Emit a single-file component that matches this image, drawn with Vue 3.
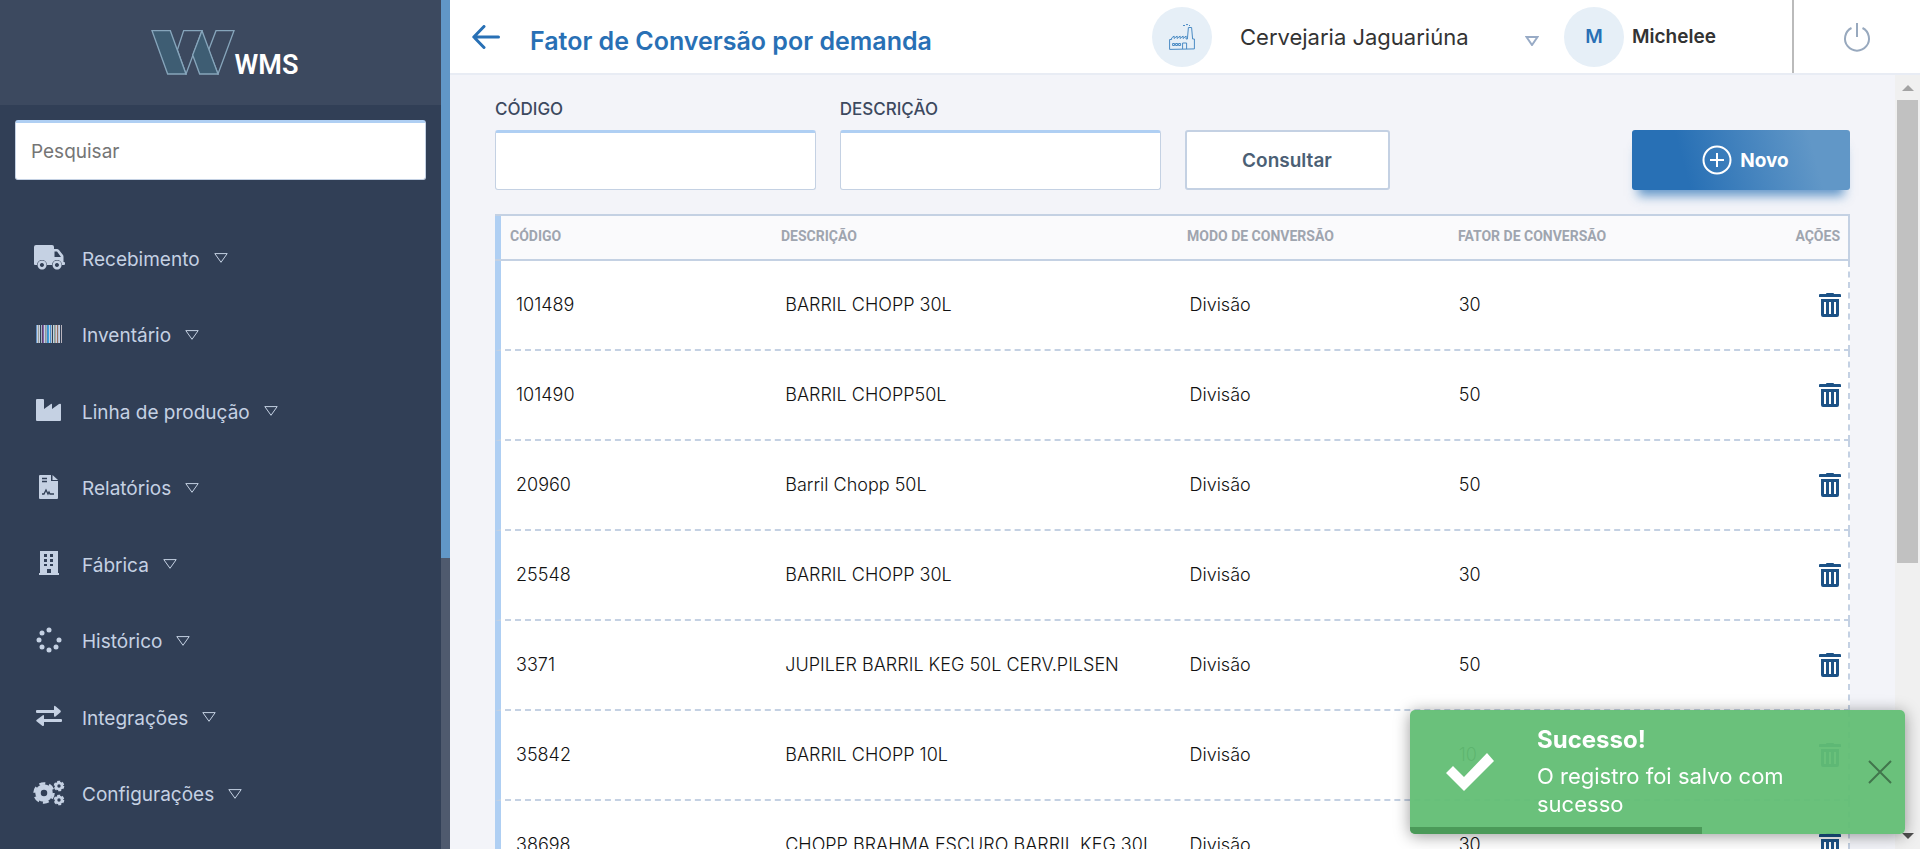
<script setup>
import { ref } from 'vue'

const menu = [
  { label: 'Recebimento', icon: 'truck' },
  { label: 'Inventário', icon: 'barcode' },
  { label: 'Linha de produção', icon: 'industry' },
  { label: 'Relatórios', icon: 'report' },
  { label: 'Fábrica', icon: 'building' },
  { label: 'Histórico', icon: 'spinner' },
  { label: 'Integrações', icon: 'exchange' },
  { label: 'Configurações', icon: 'cogs' },
]

const rows = [
  { codigo: '101489', descricao: 'BARRIL CHOPP 30L', modo: 'Divisão', fator: 30 },
  { codigo: '101490', descricao: 'BARRIL CHOPP50L', modo: 'Divisão', fator: 50 },
  { codigo: '20960', descricao: 'Barril Chopp 50L', modo: 'Divisão', fator: 50 },
  { codigo: '25548', descricao: 'BARRIL CHOPP 30L', modo: 'Divisão', fator: 30 },
  { codigo: '3371', descricao: 'JUPILER BARRIL KEG 50L CERV.PILSEN', modo: 'Divisão', fator: 50 },
  { codigo: '35842', descricao: 'BARRIL CHOPP 10L', modo: 'Divisão', fator: 10 },
  { codigo: '38698', descricao: 'CHOPP BRAHMA ESCURO BARRIL KEG 30L', modo: 'Divisão', fator: 30 },
]

const bars = [
  [3, '#5f8fc4'], [4, '#c5d1e3'], [5, '#9a9d96'], [6, '#c5d1e3'], [8, '#a9b4c6'], [9, '#5d4468'],
  [10, '#7d5fb0'], [11, '#c5d1e3'], [12, '#8d9a9a'], [13, '#a3aec0'], [14, '#3f8fc9'], [15, '#3ba3dc'],
  [16, '#c5d1e3'], [17, '#4c8fd0'], [18, '#b9c5c9'], [20, '#c5d1e3'], [21, '#7fa6a0'], [22, '#b9a09c'],
  [23, '#c5d1e3'], [24, '#96705f'], [25, '#b4c0d2'], [26, '#c5d1e3'], [28, '#b9b4bd'],
]
const dots = [[16, 3], [9, 6], [6, 13], [9, 20], [16, 23], [23, 20], [26, 13]]

const busca = ref('')
const codigo = ref('')
const descricao = ref('')
const toastOpen = ref(true)
const progress = ref(59)
</script>

<template>
  <div class="app">
    <aside class="sidebar">
      <div class="side-content">
        <div class="logo">
          <svg class="logo-mark" viewBox="0 0 250 135" aria-hidden="true">
            <g stroke="#86a5bb" stroke-width="4" stroke-linejoin="miter">
              <path d="M78 60 97 2h55l-48 130z" fill="none" />
              <path d="M172 60 194 2h54l-48 130z" fill="none" />
              <path d="M2 2h55l47 130H49z" fill="#3e5d73" />
              <path d="M152 2 200 132h-55L124 75z" fill="#3e5d73" />
            </g>
          </svg>
          <span class="logo-text">WMS</span>
        </div>
        <div class="search">
          <input v-model="busca" type="text" placeholder="Pesquisar" aria-label="Pesquisar" />
        </div>
        <nav>
          <ul class="menu">
            <li v-for="item in menu" :key="item.icon">
              <a href="#">
                <svg class="menu-icon" viewBox="0 0 32 26" aria-hidden="true">
                  <g v-if="item.icon === 'truck'">
                    <path fill-rule="evenodd" d="M3 1h16q2 0 2 2v2h3q1 0 2 1l4 5q.5.600.5 2v5h.5q1 0 1 1v1q0 1-1 1h-2a5 5 0 0 0-10 0h-5a5 5 0 0 0-10 0H2q-1 0-1-1V3q0-2 2-2zM21.500 7.500v5.500h6.500l-4-5.500z" />
                    <path fill-rule="evenodd" d="M9 16.500a4.500 4.500 0 1 0 .1 0zm0 2.500a2 2 0 1 1-.1 0zM24 16.500a4.500 4.500 0 1 0 .1 0zm0 2.500a2 2 0 1 1-.1 0z" />
                  </g>
                  <g v-else-if="item.icon === 'barcode'">
                    <rect v-for="b in bars" :key="b[0]" :x="b[0]" y="4" width="1" height="18" :fill="b[1]" />
                  </g>
                  <path v-else-if="item.icon === 'industry'" d="M4 2h6q1 0 1 1v9l7-5q1-.5 1 .5V12l7-5q2-.5 2 .5V23q0 1-1 1H4q-1 0-1-1V3q0-1 1-1z" />
                  <g v-else-if="item.icon === 'report'">
                    <path d="M7 1h11v6h7v17q0 1-1 1H7q-1 0-1-1V2q0-1 1-1zM19.500 1l5.500 5h-5.500z" />
                    <path d="M9 4.500h5M9 7.500h5M9 20h2l2-4 2 4 1-2 1 2h4" fill="none" stroke="#313f56" stroke-width="1.300" />
                  </g>
                  <path v-else-if="item.icon === 'building'" fill-rule="evenodd" d="M7 1h18v22h1v2H6v-2h1zM11 4v3h3V4zM17 4v3h3V4zM11 9v3h3V9zM17 9v3h3V9zM11 14v2h3v-2zM17 14v2h3v-2zM14 19v4h4v-4z" />
                  <g v-else-if="item.icon === 'spinner'">
                    <circle v-for="d in dots" :key="d.join()" :cx="d[0]" :cy="d[1]" r="2.500" />
                  </g>
                  <path v-else-if="item.icon === 'exchange'" d="M4 7h17V4q0-2 1.500-.8l5 4.300q.8.900 0 1.700l-5 4.300Q21 14.500 21 12.500V10H4q-1 0-1-1V8q0-1 1-1zM28 16H11v-3q0-1.500-1.500-.6l-6 4.700q-.6.500 0 1.200l6 4.600Q11 23.500 11 22v-3h17q1 0 1-1v-1q0-1-1-1z" />
                  <g v-else fill="none" stroke="#c5d1e3">
                    <circle cx="11" cy="13" r="6" stroke-width="5.500" />
                    <circle cx="11" cy="13" r="9.500" stroke-width="2.500" stroke-dasharray="6 3.948" />
                    <circle cx="26" cy="6" r="3" stroke-width="2.600" />
                    <circle cx="26" cy="6" r="4.500" stroke-width="1.600" stroke-dasharray="3 1.712" />
                    <circle cx="26" cy="20" r="3" stroke-width="2.600" />
                    <circle cx="26" cy="20" r="4.500" stroke-width="1.600" stroke-dasharray="3 1.712" />
                  </g>
                </svg>
                <span>{{ item.label }}</span>
                <svg class="caret" viewBox="0 0 14 10" aria-hidden="true"><path d="M.8.600h12.400L7 9.300z" /></svg>
              </a>
            </li>
          </ul>
        </nav>
      </div>
      <div class="side-scroll"><div class="side-thumb"></div></div>
    </aside>

    <div class="page">
      <header class="topbar">
        <button class="back" type="button" aria-label="Voltar">
          <svg viewBox="0 0 28 24" aria-hidden="true"><path d="M26.500 12H2M12 1.500 1.800 12 12 22.500" /></svg>
        </button>
        <h1>Fator de Conversão por demanda</h1>
        <div class="unit">
          <span class="circle">
            <svg class="plant" viewBox="0 0 26 26" aria-hidden="true">
              <path d="M.6 25.400V15.500h2V14l2.500-2v2.500l3-2.500v2.500l3-2.500v2.500l3-2.500v2.500l3-2.500v3h1.300l1-11.500h3.200l1 11.500h1.800v9.900zM14 1.500h2M17 .600h2M20 1.500h1" />
              <path d="M13.600 25V19h4v6M3.600 19.500h2v2h-2zM6.600 19.500h2v2h-2zM9.600 19.500h2v2h-2z" />
            </svg>
          </span>
          <span class="unit-pick">
            <select aria-label="Unidade">
              <option>Cervejaria Jaguariúna</option>
            </select>
            <svg class="caret" viewBox="0 0 14 10" aria-hidden="true"><path d="M1.500 1h11L7 9z" /></svg>
          </span>
        </div>
        <div class="user">
          <span class="circle initial">M</span>
          <span class="name">Michelee</span>
        </div>
        <button class="power" type="button" aria-label="Sair">
          <svg viewBox="0 0 28 30" aria-hidden="true"><path d="M14 1v14M8.500 6a12 12 0 1 0 11 0" /></svg>
        </button>
      </header>

      <div class="body">
        <main class="content">
          <form class="filters" @submit.prevent>
            <div class="field">
              <label for="f-codigo">CÓDIGO</label>
              <input id="f-codigo" v-model="codigo" type="text" />
            </div>
            <div class="field">
              <label for="f-descricao">DESCRIÇÃO</label>
              <input id="f-descricao" v-model="descricao" type="text" />
            </div>
            <button class="query" type="submit">Consultar</button>
            <button class="new" type="button">
              <svg viewBox="0 0 30 30" aria-hidden="true"><circle cx="15" cy="15" r="13.500" /><path d="M15 8v14M8 15h14" /></svg>
              Novo
            </button>
          </form>

          <table>
            <thead>
              <tr>
                <th>CÓDIGO</th>
                <th>DESCRIÇÃO</th>
                <th>MODO DE CONVERSÃO</th>
                <th>FATOR DE CONVERSÃO</th>
                <th>AÇÕES</th>
              </tr>
            </thead>
            <tbody>
              <tr v-for="row in rows" :key="row.codigo">
                <td>{{ row.codigo }}</td>
                <td>{{ row.descricao }}</td>
                <td>{{ row.modo }}</td>
                <td>{{ row.fator }}</td>
                <td>
                  <button type="button" class="trash" :aria-label="'Excluir ' + row.codigo">
                    <svg viewBox="0 0 22 24" aria-hidden="true">
                      <path d="M7 1q0-1 1-1h6q1 0 1 1h6q1 0 1 1v2H0V2q0-1 1-1z" />
                      <path fill-rule="evenodd" d="M2 6h18v16q0 2-2 2H4q-2 0-2-2zM5 9v12h2V9zM10 9v12h2V9zM15 9v12h2V9z" />
                    </svg>
                  </button>
                </td>
              </tr>
            </tbody>
          </table>
        </main>
        <div class="scroll">
          <span class="arrow up"></span>
          <div class="track"><div class="thumb"></div></div>
          <span class="arrow down"></span>
        </div>
      </div>
    </div>

    <div v-if="toastOpen" class="toast" role="status">
      <svg class="check" viewBox="0 0 48 38" aria-hidden="true"><path d="M0 20l7-7 11 11L41 0l7 8-30 30z" /></svg>
      <div class="toast-text">
        <strong>Sucesso!</strong>
        <p>O registro foi salvo com sucesso</p>
      </div>
      <button type="button" class="close" aria-label="Fechar" @click="toastOpen = false">
        <svg viewBox="0 0 24 24" aria-hidden="true"><path d="M1 1l22 22M23 1 1 23" /></svg>
      </button>
      <div class="progress" :style="{ width: progress + '%' }"></div>
    </div>
  </div>
</template>

<style>
body {
  margin: 0;
  overflow: hidden;
}
</style>

<style scoped>
.app {
  display: flex;
  height: 100vh;
  font-family: Inter, "Open Sans", sans-serif;
  background: #f3f4f9;
}
.app * {
  box-sizing: border-box;
}
button {
  padding: 0;
  border: 0;
  background: none;
  font: inherit;
  cursor: pointer;
}
svg {
  display: block;
  flex: none;
}

/* Sidebar */
.sidebar {
  display: flex;
  flex: none;
  width: 450px;
  background: #313f56;
}
.side-content {
  flex: 1;
  overflow: hidden;
}
.logo {
  display: flex;
  align-items: flex-end;
  justify-content: center;
  height: 105px;
  padding: 0 0 30px 8px;
  background: #3c495f;
}
.logo-mark {
  width: 84px;
  height: 45px;
}
.logo-text {
  height: 25px;
  color: #fff;
  font-family: Roboto, sans-serif;
  font-size: 27px;
  font-weight: 600;
  line-height: 30px;
}
.search {
  padding: 15px 15px 41px;
}
input {
  display: block;
  width: 100%;
  height: 60px;
  padding: 0 15px;
  border: 1px solid #c4d1e3;
  border-top: 3px solid #afcff3;
  border-radius: 3px;
  background: #fff;
  font: 19px Inter, sans-serif;
  color: #313f56;
}
input::placeholder {
  color: #757575;
  opacity: 1;
}
.menu {
  display: flex;
  flex-direction: column;
  height: 612px;
  margin: 0;
  padding: 0;
  list-style: none;
}
.menu li {
  flex: 1;
}
.menu a {
  display: flex;
  align-items: center;
  height: 100%;
  padding-left: 33px;
  color: #c5d1e3;
  font-size: 19px;
  text-decoration: none;
}
.menu-icon {
  width: 32px;
  height: 26px;
  margin: 0 17px 4px 0;
  fill: #c5d1e3;
}
.caret {
  width: 14px;
  height: 10px;
  margin: 0 0 2px 14px;
  fill: none;
  stroke: currentColor;
}
.side-scroll {
  width: 9px;
  background: #4f5a6e;
}
.side-thumb {
  height: 558px;
  background: #6197c7;
}

/* Top bar */
.page {
  display: flex;
  flex: 1;
  flex-direction: column;
  min-width: 0;
}
.topbar {
  display: flex;
  flex: none;
  align-items: center;
  height: 75px;
  border-bottom: 2px solid #e8ecf4;
  background: #fff;
}
.back {
  margin: 0 30px 0 22px;
}
.back svg {
  width: 28px;
  height: 24px;
  fill: none;
  stroke: #2870b5;
  stroke-width: 3;
  stroke-linecap: round;
  stroke-linejoin: round;
}
h1 {
  flex: 1;
  margin: 0;
  padding-top: 8px;
  color: #2870b5;
  font-size: 25px;
  font-weight: 600;
  line-height: 32px;
  white-space: nowrap;
}
.unit {
  display: flex;
  align-items: center;
  gap: 28px;
  margin-right: 25px;
}
.circle {
  display: flex;
  flex: none;
  align-items: center;
  justify-content: center;
  width: 60px;
  height: 60px;
  border-radius: 50%;
  background: #e6eff7;
  color: #2870b5;
}
.plant {
  width: 26px;
  height: 26px;
  fill: none;
  stroke: #4a8bc4;
}
.unit-pick {
  display: flex;
  align-items: center;
  width: 299px;
  color: #98abc6;
}
.unit-pick select {
  flex: 1;
  padding: 0;
  border: 0;
  appearance: none;
  background: none;
  color: #333;
  font: 22px/30px Inter, sans-serif;
}
.unit-pick .caret {
  margin-top: 10px;
  stroke-width: 2;
}
.user {
  display: flex;
  align-items: center;
  gap: 8px;
  width: 228px;
  font-size: 19px;
  font-weight: 600;
  color: #333;
}
.power {
  display: flex;
  align-items: center;
  justify-content: center;
  width: 128px;
  height: 100%;
  border-left: 2px solid #bbb;
}
.power svg {
  width: 28px;
  height: 30px;
  fill: none;
  stroke: #98a9be;
  stroke-width: 2;
}

/* Content */
.body {
  display: flex;
  flex: 1;
  min-height: 0;
}
.content {
  flex: 1;
  min-width: 0;
  padding: 24px 45px 0;
  overflow: hidden;
}
.filters {
  display: grid;
  grid-template-columns: repeat(4, 1fr);
  align-items: end;
  gap: 24px;
  margin-bottom: 24px;
}
.field label {
  display: block;
  margin-bottom: 11px;
  color: #3c495f;
  font-size: 17px;
  font-weight: 500;
  line-height: 20px;
}
.query {
  width: 205px;
  height: 60px;
  border: 2px solid #c4d1e3;
  border-radius: 3px;
  background: #fff;
  color: #4b5f75;
  font-size: 19px;
  font-weight: 600;
}
.new {
  display: flex;
  align-items: center;
  justify-content: center;
  justify-self: end;
  gap: 8px;
  width: 218px;
  height: 60px;
  padding-left: 9px;
  border-radius: 3px;
  background: linear-gradient(75deg, #2870b5 25%, #6197c7 82%);
  box-shadow: 0 12px 10px -6px rgba(40, 112, 181, 0.7);
  color: #fff;
  font-size: 19px;
  font-weight: 700;
}
.new svg {
  width: 30px;
  height: 30px;
  fill: none;
  stroke: #fff;
  stroke-width: 2;
}

table {
  display: block;
  width: 100%;
}
thead,
tbody {
  display: block;
}
tr {
  display: grid;
  align-items: center;
}
thead tr {
  grid-template-columns: 271fr 406fr 271fr 271fr 111fr;
  height: 47px;
  padding: 0 10px 3px 15px;
  border: solid #c4d1e3;
  border-width: 2px 0;
  background: #fafafc;
  box-shadow: inset 6px 0 #afcff3, inset -2px 0 #c4d1e3;
}
th {
  padding: 0;
  color: #9fa5af;
  font-family: Roboto, sans-serif;
  font-size: 14px;
  font-weight: 700;
  line-height: 20px;
  text-align: left;
  white-space: nowrap;
}
th:last-child {
  text-align: right;
}
tbody tr {
  grid-template-columns: 269fr 404fr 269fr 269fr 113fr;
  height: 90px;
  padding: 0 7px 0 15px;
  border: 2px dashed #c4d1e3;
  border-top: 0;
  border-left: 6px solid #afcff3;
  background: #fff;
}
td {
  padding: 0;
  color: #111;
  font-size: 18px;
  font-weight: 300;
  line-height: 24px;
  white-space: nowrap;
}
.trash {
  display: block;
  margin-left: auto;
}
.trash svg {
  width: 22px;
  height: 24px;
  fill: #1c5286;
}

.scroll {
  display: flex;
  flex: none;
  flex-direction: column;
  align-items: center;
  width: 25px;
  padding: 10px 0;
  background: #f0f0f0;
}
.arrow {
  border: 6px solid transparent;
}
.up {
  border-top: 0;
  border-bottom-color: #a3a3a3;
}
.down {
  border-bottom: 0;
  border-top-color: #505050;
}
.track {
  flex: 1;
  width: 21px;
  padding: 9px 0;
}
.thumb {
  height: 64%;
  background: #c1c1c1;
}

/* Toast */
.toast {
  position: fixed;
  right: 15px;
  bottom: 15px;
  display: flex;
  align-items: center;
  width: 495px;
  height: 124px;
  padding: 0 13px 0 36px;
  border-radius: 5px;
  overflow: hidden;
  background: rgba(98, 190, 116, 0.95);
  box-shadow: 0 2px 16px rgba(0, 0, 0, 0.4);
  color: #fff;
}
.check {
  width: 48px;
  height: 38px;
  fill: #fff;
}
.toast-text {
  flex: 1;
  padding: 0 30px 0 43px;
  font-size: 22px;
  line-height: 28px;
}
.toast-text strong {
  display: block;
  margin-bottom: 8px;
  font-size: 24px;
}
.toast-text p {
  margin: 0;
}
.close svg {
  width: 24px;
  height: 24px;
  fill: none;
  stroke: #41754c;
  stroke-width: 2;
}
.progress {
  position: absolute;
  bottom: 0;
  left: 0;
  height: 7px;
  background: #4b9a59;
}
</style>
